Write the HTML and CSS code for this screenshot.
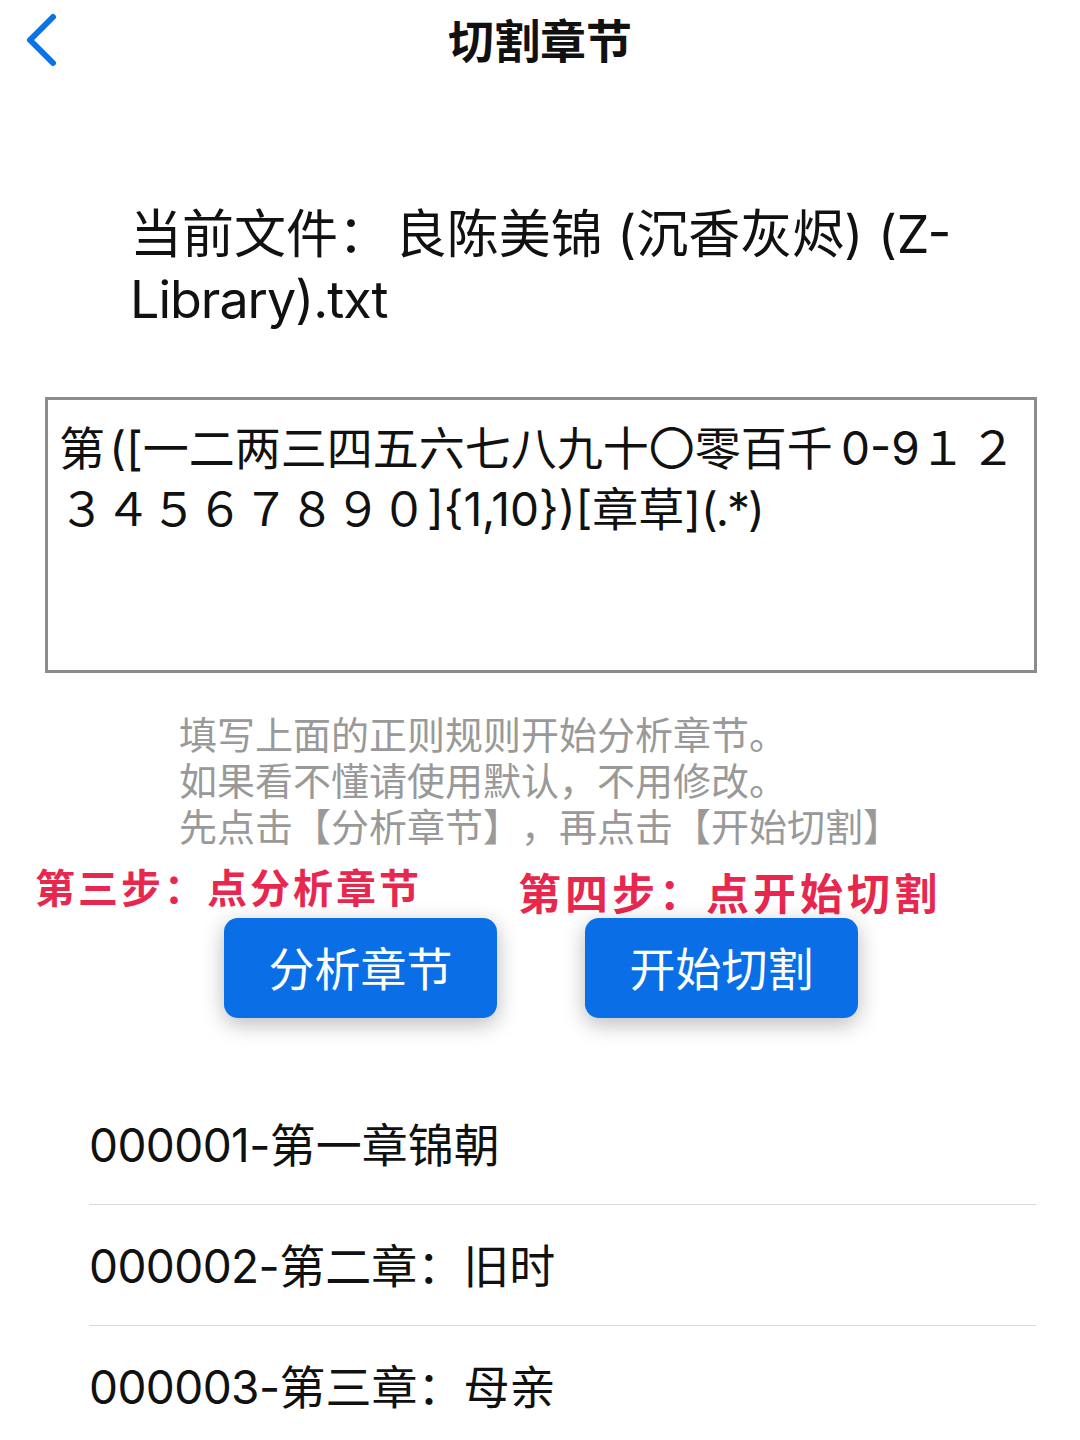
FILE: index.html
```html
<!DOCTYPE html>
<html lang="zh-CN">
<head>
    <meta charset="UTF-8" />
    <title>切割章节</title>
    <link rel="stylesheet" href="styles.css">
</head>
<body>
    <header class="nav-bar">
        <svg class="back-icon" viewBox="0 0 36 56" width="36" height="56">
            <path d="M30 5 L7 28 L30 51" fill="none" stroke="#0a73e8" stroke-width="6" stroke-linecap="round" stroke-linejoin="round" />
        </svg>
        <h1>切割章节</h1>
    </header>

    <p class="file-name">当前文件：&hairsp;良陈美锦 (沉香灰烬) (Z-<span class="tight">Library).txt</span></p>

    <div class="rule-box">第&hairsp;([一二两三四五六七八九十〇零百千&thinsp;0-9１&hairsp;２<br>３４５６７８９０]{1,10})[章草]<span class="tighter">(.*)</span></div>

    <p class="hint">填写上面的正则规则开始分析章节。<br>如果看不懂请使用默认，不用修改。<br>先点击【分析章节】，再点击【开始切割】</p>

    <div class="steps">
        <span class="step">第三步：点分析章节</span>
        <span class="step step-right">第四步：点开始切割</span>
    </div>

    <div class="buttons">
        <button class="btn">分析章节</button>
        <button class="btn">开始切割</button>
    </div>

    <ul class="chapter-list">
        <li><span class="num">000001-</span>第一章锦朝</li>
        <li><span class="num">000002-</span>第二章：旧时</li>
        <li><span class="num">000003-</span>第三章：母亲</li>
    </ul>
</body>
</html>
```

FILE: styles.css
```css
html, body {
    margin: 0;
    padding: 0;
}

body {
    width: 1080px;
    height: 1440px;
    overflow: hidden;
    background: #fff;
    color: #111;
    font-family: Inter, "Noto Sans CJK SC", sans-serif;
    text-spacing-trim: space-all;
}

.nav-bar {
    position: relative;
    height: 82px;
    display: flex;
    align-items: center;
    justify-content: center;
}

.nav-bar h1 {
    margin: 0;
    font-size: 46px;
    font-weight: 700;
    line-height: 82px;
}

.back-icon {
    position: absolute;
    left: 23px;
    top: 12px;
}

.file-name {
    margin: 120px 120px 0 130px;
    font-size: 52px;
    line-height: 65px;
}

.tight {
    letter-spacing: -1px;
}

.rule-box {
    box-sizing: border-box;
    margin: 65px 43px 0 45px;
    height: 276px;
    padding: 18px 2px 0 11px;
    border: 3px solid #8c8c8c;
    font-size: 46px;
    line-height: 61px;
}

.tighter {
    letter-spacing: -2px;
}

.hint {
    margin: 39px 0 0 179px;
    color: #999;
    font-size: 38px;
    line-height: 46px;
}

.steps {
    display: flex;
    height: 60px;
    margin-top: 8px;
    padding-left: 35px;
}

.step {
    color: #e8274f;
    font-family: "Noto Sans CJK TC", sans-serif;
    font-size: 40px;
    font-weight: 700;
    line-height: 56px;
    letter-spacing: 3px;
    white-space: nowrap;
}

.step-right {
    margin-left: 96px;
    padding-top: 5px;
    font-size: 43px;
    letter-spacing: 4px;
}

.buttons {
    display: flex;
    gap: 88px;
    padding-left: 224px;
}

.btn {
    width: 273px;
    height: 100px;
    padding: 0 0 4px;
    border: 0;
    border-radius: 14px;
    background: #0a6fe6;
    color: #fff;
    font-family: inherit;
    font-size: 46px;
    box-shadow: 0 6px 22px rgba(0, 0, 0, 0.28);
}

.chapter-list {
    list-style: none;
    margin: 66px 44px 0 89px;
    padding: 0;
}

.chapter-list li {
    height: 120px;
    border-bottom: 1px solid #d8d8d8;
    font-size: 46px;
    line-height: 122px;
}

.num {
    letter-spacing: -0.6px;
}
```
